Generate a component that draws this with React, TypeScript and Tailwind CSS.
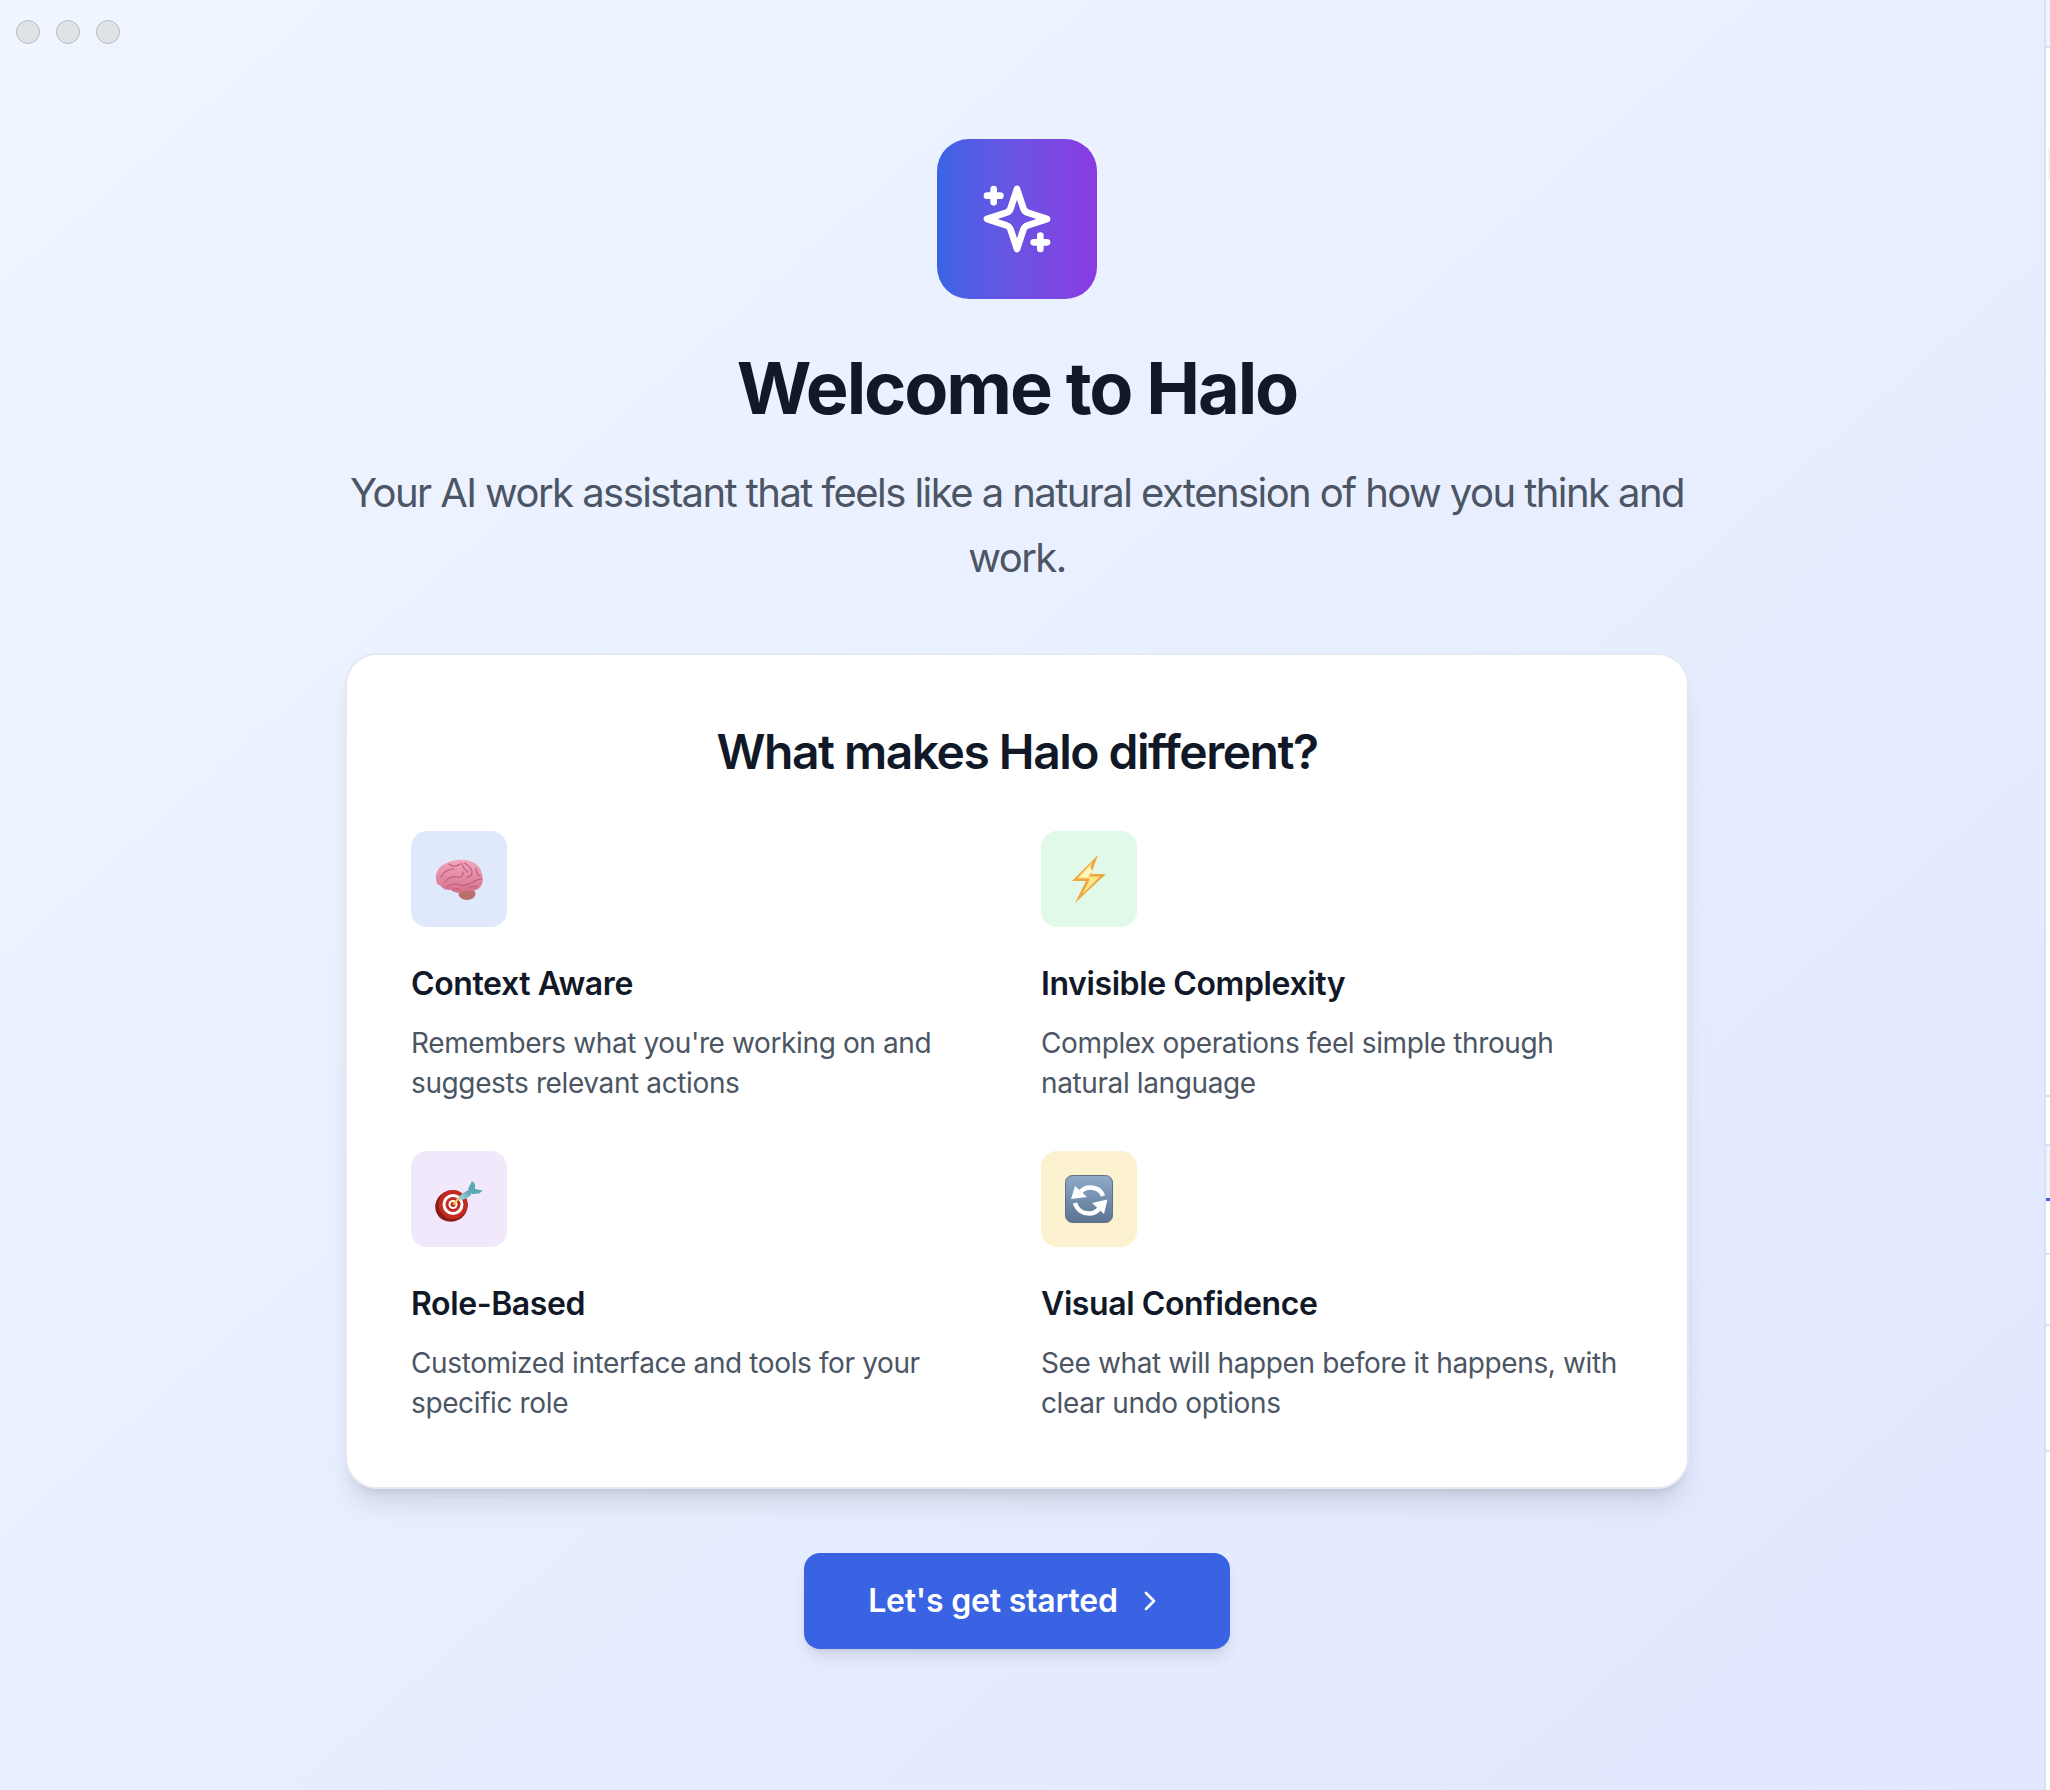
import { ChevronRight } from 'lucide-react';

const features = [
  {
    title: 'Context Aware',
    desc: "Remembers what you're working on and suggests relevant actions",
    tile: 'bg-[#dfe9fb]',
    icon: <BrainEmoji />,
  },
  {
    title: 'Invisible Complexity',
    desc: 'Complex operations feel simple through natural language',
    tile: 'bg-[#e1f9e9]',
    icon: <BoltEmoji />,
  },
  {
    title: 'Role-Based',
    desc: 'Customized interface and tools for your specific role',
    tile: 'bg-[#f2e8fc]',
    icon: <DartEmoji />,
  },
  {
    title: 'Visual Confidence',
    desc: 'See what will happen before it happens, with clear undo options',
    tile: 'bg-[#fcf2cf]',
    icon: <ArrowsEmoji />,
  },
];

function BrainEmoji() {
  return (
    <svg width="48" height="48" viewBox="0 0 48 48" fill="none">
      <defs>
        <linearGradient id="brain" x1="0" y1="0" x2="0" y2="1">
          <stop offset="0" stopColor="#f0a9bd" />
          <stop offset="1" stopColor="#d46f8c" />
        </linearGradient>
      </defs>
      <ellipse cx="32" cy="39" rx="8.5" ry="6" fill="#b9706a" />
      <path
        d="M1 24C0 17 5 10 12 8C18 4 29 4 35 6C42 8 47 14 47.5 22C48.5 28 46 33 41 35C37 37 33 35 29 36C25 39 20 38 16 35C11 35 8 34 6 31C3 30 1 28 1 24Z"
        fill="url(#brain)"
      />
      <g stroke="#c25a7c" strokeWidth="1.1" strokeLinecap="round">
        <path d="M6 22C9 16 14 14 19 14M10 27C13 23 17 21 22 22C26 23 28 21 28 17" />
        <path d="M14 9C17 12 22 12 25 9M30 8C33 11 36 12 37 16C38 20 35 22 32 22" />
        <path d="M12 32C16 29 20 28 25 30C30 32 34 29 38 27C41 25 44 24 47 24" />
        <path d="M33 17C29 14 27 11 27 8M41 13C41 17 42 20 45 21M34 33C36 31 40 31 43 32" />
        <path d="M18 35C20 33 22 33 24 35" />
      </g>
    </svg>
  );
}

function BoltEmoji() {
  return (
    <svg width="48" height="48" viewBox="0 0 48 48" fill="none">
      <path d="M33 0L7 26H21L10 48L41 19H26Z" fill="#f0a63c" />
      <path d="M27.5 7L12 23.5H25L17.5 39L35 21.5H22Z" fill="#fde68a" />
      <path d="M25 11L15 22H23.5L27 16Z" fill="#fff7c2" />
    </svg>
  );
}

function DartEmoji() {
  return (
    <svg width="48" height="48" viewBox="0 0 48 48" fill="none">
      <defs>
        <linearGradient id="flight" x1="0" y1="1" x2="1" y2="0">
          <stop offset="0" stopColor="#a9dbe4" />
          <stop offset="1" stopColor="#4f9dab" />
        </linearGradient>
      </defs>
      <ellipse cx="16.5" cy="31" rx="16.5" ry="15.5" fill="#8a1c17" transform="rotate(-30 16.5 31)" />
      <circle cx="18" cy="29.5" r="14.5" fill="#c32a20" />
      <circle cx="18" cy="29.5" r="10.5" fill="#ffffff" />
      <circle cx="18" cy="29.5" r="7.5" fill="#c32a20" />
      <circle cx="18" cy="29.5" r="4.5" fill="#ffffff" />
      <circle cx="18" cy="29.5" r="2.5" fill="#c32a20" />
      <path d="M19 29L24 23" stroke="#e9cf4a" strokeWidth="2" strokeLinecap="round" />
      <path d="M23 24.5C24 20 31 15.5 36 14.5L36 20C33 23 27 26 23 24.5Z" fill="url(#flight)" />
      <path d="M33 14L37 6L40 9L40 14L48 15.5L44 18.5L37 19Z" fill="#5aa9b8" />
    </svg>
  );
}

function ArrowsEmoji() {
  return (
    <svg width="48" height="48" viewBox="0 0 48 48" fill="none">
      <defs>
        <linearGradient id="arrowsBg" x1="0" y1="0" x2="0" y2="1">
          <stop offset="0" stopColor="#8fabc9" />
          <stop offset="1" stopColor="#5a7392" />
        </linearGradient>
      </defs>
      <rect x="0.5" y="0.5" width="47" height="47" rx="7" fill="url(#arrowsBg)" stroke="#5c7086" />
      <path d="M38 21C36 15 31 12.5 25 12.5C21 12.5 18 14 15.5 17" stroke="#ffffff" strokeWidth="4.5" />
      <path d="M6 24L10 11L22 22Z" fill="#ffffff" />
      <path d="M10 28C12 35 18 38.5 24 38.5C28 38.5 32 37 34.5 33" stroke="#ffffff" strokeWidth="4.5" />
      <path d="M42.5 24.5L39 39L27 28Z" fill="#ffffff" />
    </svg>
  );
}

function Sparkles() {
  return (
    <svg
      width="80"
      height="80"
      viewBox="0 0 24 24"
      fill="none"
      stroke="white"
      strokeWidth="2"
      strokeLinecap="round"
      strokeLinejoin="round"
    >
      <path d="m12 3-1.912 5.813a2 2 0 0 1-1.275 1.275L3 12l5.813 1.912a2 2 0 0 1 1.275 1.275L12 21l1.912-5.813a2 2 0 0 1 1.275-1.275L21 12l-5.813-1.912a2 2 0 0 1-1.275-1.275L12 3Z" />
      <path d="M5 3v4" />
      <path d="M19 17v4" />
      <path d="M3 5h4" />
      <path d="M17 19h4" />
    </svg>
  );
}

export default function App() {
  return (
    <div className="flex h-[1790px] overflow-hidden font-['Inter',sans-serif]">
      <div className="relative flex-1 flex flex-col items-center pt-[139px] pr-[10px] bg-gradient-to-br from-[#f0f6ff] to-[#e0e7ff]">
        {/* Window controls */}
        <div className="absolute left-[16px] top-[20px] flex gap-4">
          <span className="w-6 h-6 rounded-full bg-[#dfe2e6] border border-[#b9bcc0]" />
          <span className="w-6 h-6 rounded-full bg-[#dfe2e6] border border-[#b9bcc0]" />
          <span className="w-6 h-6 rounded-full bg-[#dfe2e6] border border-[#b9bcc0]" />
        </div>

        <div className="w-40 h-40 rounded-[32px] bg-gradient-to-r from-[#3a64e4] to-[#8a3ae2] flex items-center justify-center">
          <Sparkles />
        </div>

        <h1 className="mt-[49px] text-[72px] leading-[80px] font-bold tracking-[-2.1px] text-[#111827]">
          Welcome to Halo
        </h1>

        <p className="mt-[32px] w-[1344px] text-center text-[40px] leading-[65px] tracking-[-1.56px] text-[#4b5563]">
          Your AI work assistant that feels like a natural extension of how you think and work.
        </p>

        <div className="mt-[63px] w-[1344px] rounded-[32px] bg-white border-2 border-[#e5e9f2] shadow-[0_20px_25px_-5px_rgba(0,0,0,0.1),0_8px_10px_-6px_rgba(0,0,0,0.1)] p-16">
          <h2 className="mt-px text-center text-[48px] leading-[64px] font-semibold tracking-[-1.5px] text-[#111827]">
            What makes Halo different?
          </h2>
          <div className="mt-[47px] grid grid-cols-2 gap-12">
            {features.map((f) => (
              <div key={f.title}>
                <div className={`w-24 h-24 rounded-[16px] flex items-center justify-center ${f.tile}`}>
                  {f.icon}
                </div>
                <h3 className="mt-[33px] text-[32px] leading-[48px] font-semibold tracking-[-0.4px] text-[#111827]">
                  {f.title}
                </h3>
                <p className="mt-[15px] text-[28px] leading-[40px] tracking-[-0.38px] text-[#4b5563]">{f.desc}</p>
              </div>
            ))}
          </div>
        </div>

        <button className="mt-[64px] h-24 px-16 rounded-[16px] bg-[#3a63e4] text-white flex items-center gap-4 text-[32px] font-semibold tracking-[-0.2px] shadow-[0_10px_15px_-3px_rgba(0,0,0,0.1),0_4px_6px_-4px_rgba(0,0,0,0.1)]">
          Let's get started
          <ChevronRight size={32} strokeWidth={2} />
        </button>
      </div>

      {/* Edge of the next panel */}
      <div className="w-[6px] bg-white border-l-2 border-[#d7e2f8] flex flex-col">
        <div className="h-[48px] bg-[#f0f4fc] border-b-2 border-[#d7e2f8]" />
        <div className="mt-[100px] ml-[2px] h-[32px] bg-[#f3f4f6]" />
        <div className="mt-[915px] h-[2px] bg-[#d7e2f8]" />
        <div className="mt-[47px] h-[54px] bg-[#f0f4fb] border-t-2 border-[#d7e2f8]" />
        <div className="h-[3px] bg-[#3b63e5]" />
        <div className="mt-[52px] h-[2px] bg-[#d7e2f8]" />
        <div className="mt-[69px] h-[2px] bg-[#d7e2f8]" />
        <div className="mt-[124px] h-[2px] bg-[#d7e2f8]" />
      </div>
    </div>
  );
}
